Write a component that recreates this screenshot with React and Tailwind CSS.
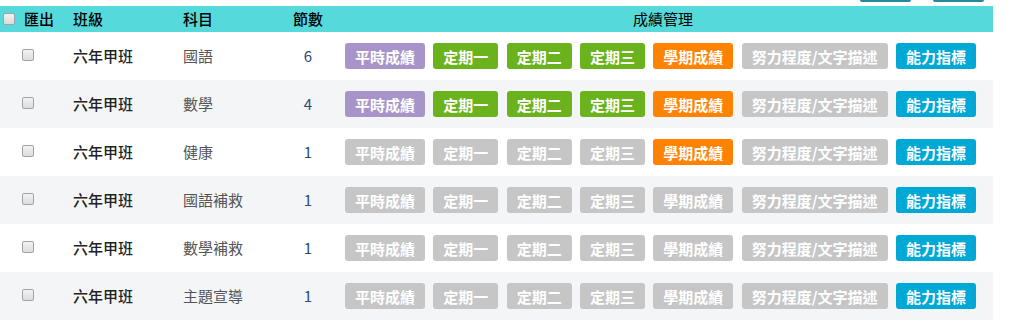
import React from "react";

const font = {
  fontFamily: '"Noto Sans CJK TC", "Noto Sans", sans-serif',
};

const rows = [
  { cls: "六年甲班", subject: "國語", count: 6, daily: true, terms: true, semester: true },
  { cls: "六年甲班", subject: "數學", count: 4, daily: true, terms: true, semester: true },
  { cls: "六年甲班", subject: "健康", count: 1, daily: false, terms: false, semester: true },
  { cls: "六年甲班", subject: "國語補救", count: 1, daily: false, terms: false, semester: false },
  { cls: "六年甲班", subject: "數學補救", count: 1, daily: false, terms: false, semester: false },
  { cls: "六年甲班", subject: "主題宣導", count: 1, daily: false, terms: false, semester: false },
];

const Btn = ({ label, color, w }) => (
  <button
    type="button"
    className={`h-[26px] rounded-[3px] text-white font-bold text-[15px] leading-none whitespace-nowrap ${w} ${color}`}
  >
    {label}
  </button>
);

const Box = ({ className = "" }) => (
  <input
    type="checkbox"
    className={`appearance-none w-[12px] h-[12px] rounded-[2px] border border-[#a3a3a3] bg-gradient-to-b from-[#f3f3f3] to-[#dcdcdc] ${className}`}
  />
);

const GRID = "grid grid-cols-[65px_110px_108px_50px_1fr] w-[993px]";

export default function App() {
  return (
    <div className="w-[1017px] h-[336px] bg-white overflow-hidden" style={font}>
      <div className="flex h-[6px] w-[993px] justify-end gap-[22px] pr-[9px]">
        <div className="w-[51px] h-[2px] rounded-b-[3px] bg-[#268996]" />
        <div className="w-[51px] h-[2px] rounded-b-[3px] bg-[#268996]" />
      </div>

      <div className={`${GRID} h-[26px] bg-[#55d9da] items-center text-[15px] text-black font-medium`}>
        <div className="flex items-center gap-[9px] pl-[3px]">
          <Box />
          <span>匯出</span>
        </div>
        <div className="pl-[8px]">班級</div>
        <div className="pl-[8px]">科目</div>
        <div className="text-center">節數</div>
        <div className="text-center font-normal">成績管理</div>
      </div>

      {rows.map((r, i) => {
        const off = "bg-[#c6c6c6]";
        return (
          <div
            key={i}
            className={`${GRID} h-[48px] items-center text-[15px] ${
              i % 2 === 1 ? "bg-[#f4f5f7]" : "bg-white"
            }`}
          >
            <div className="flex pl-[22px] pb-[2px]">
              <Box />
            </div>
            <div className="pl-[8px] font-medium text-[#222222]">{r.cls}</div>
            <div className="pl-[8px] text-[#555555]">{r.subject}</div>
            <div className="text-center text-[#2c4a73]">{r.count}</div>
            <div className="flex items-center gap-[8.35px] pl-[12px]">
              <Btn label="平時成績" w="w-[80px]" color={r.daily ? "bg-[#a795c9]" : off} />
              <Btn label="定期一" w="w-[65px]" color={r.terms ? "bg-[#6bb31c]" : off} />
              <Btn label="定期二" w="w-[65px]" color={r.terms ? "bg-[#6bb31c]" : off} />
              <Btn label="定期三" w="w-[65px]" color={r.terms ? "bg-[#6bb31c]" : off} />
              <Btn label="學期成績" w="w-[80px]" color={r.semester ? "bg-[#ff8200]" : off} />
              <Btn label="努力程度/文字描述" w="w-[146px]" color={off} />
              <Btn label="能力指標" w="w-[80px]" color="bg-[#00a8d6]" />
            </div>
          </div>
        );
      })}
    </div>
  );
}
